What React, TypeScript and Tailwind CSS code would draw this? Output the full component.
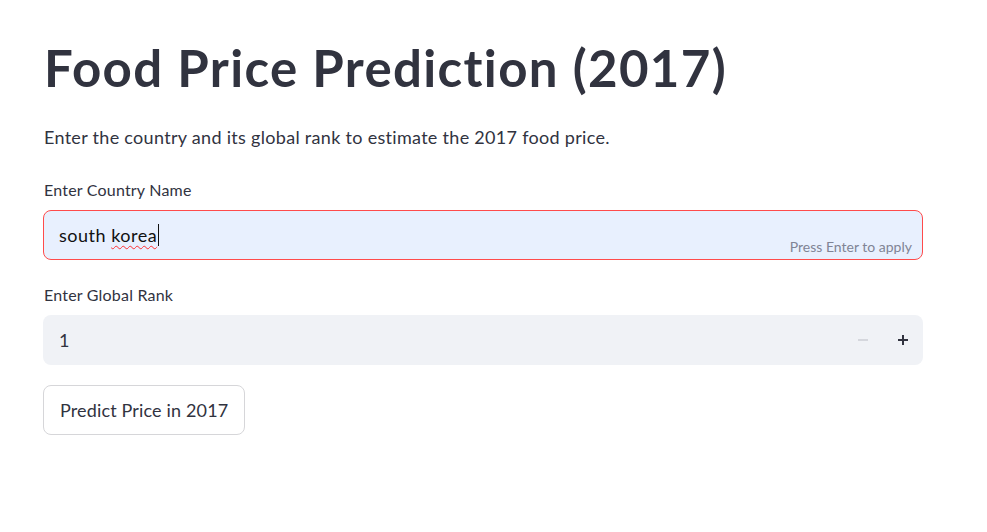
import React from "react";

export default function App() {
  return (
    <div
      className="min-h-[532px] w-full bg-white text-[#31333F]"
      style={{ fontFamily: "Lato, 'Noto Sans', sans-serif" }}
    >
      <div className="w-[880px] ml-[43px] pt-[38px] flex flex-col">
        <h1 className="text-[51px] leading-[60px] font-bold pl-[1px] tracking-[1.35px]">
          Food Price Prediction (2017)
        </h1>
        <p className="mt-[25px] text-[18px] leading-[28px] pl-[1px] tracking-[0.3px]">
          Enter the country and its global rank to estimate the 2017 food price.
        </p>

        <label className="mt-[29px] text-[16px] leading-[20px] pl-[1px] tracking-[0.2px]">
          Enter Country Name
        </label>
        <div className="relative mt-[10px] h-[50px] rounded-[8px] border border-[#FF4B4B] bg-[#E8F0FE] flex items-center pl-[15px]">
          <span className="text-[18px] leading-[24px] text-[#111] tracking-[0.5px]">
            south{" "}
            <span className="underline decoration-wavy decoration-[#FF3030] decoration-1 underline-offset-[3px]">
              korea
            </span>
          </span>
          <span className="ml-[1px] w-[1px] h-[22px] bg-[#111]" />
          <span className="absolute right-[10px] bottom-[4px] text-[14px] leading-[16px] text-[#808495]">
            Press Enter to apply
          </span>
        </div>

        <label className="mt-[25px] text-[16px] leading-[20px] pl-[1px] tracking-[0.2px]">
          Enter Global Rank
        </label>
        <div className="mt-[10px] h-[50px] rounded-[8px] bg-[#F0F2F6] flex items-center">
          <span className="pl-[16px] text-[18px] leading-[24px] flex-1">1</span>
          <div className="flex items-center h-full">
            <div className="w-[40px] h-full flex items-center justify-center">
              <svg width="12" height="12" viewBox="0 0 12 12">
                <rect x="1" y="5" width="10" height="2" fill="#D5D7DD" />
              </svg>
            </div>
            <div className="w-[40px] h-full flex items-center justify-center">
              <svg width="12" height="12" viewBox="0 0 12 12">
                <rect x="1" y="5" width="10" height="2" fill="#31333F" />
                <rect x="5" y="1" width="2" height="10" fill="#31333F" />
              </svg>
            </div>
          </div>
        </div>

        <div className="mt-[20px]">
          <button className="h-[50px] px-[16px] rounded-[8px] border border-[#D6D6D9] bg-white text-[18px] text-[#31333F] tracking-[0.15px]">
            Predict Price in 2017
          </button>
        </div>
      </div>
    </div>
  );
}
